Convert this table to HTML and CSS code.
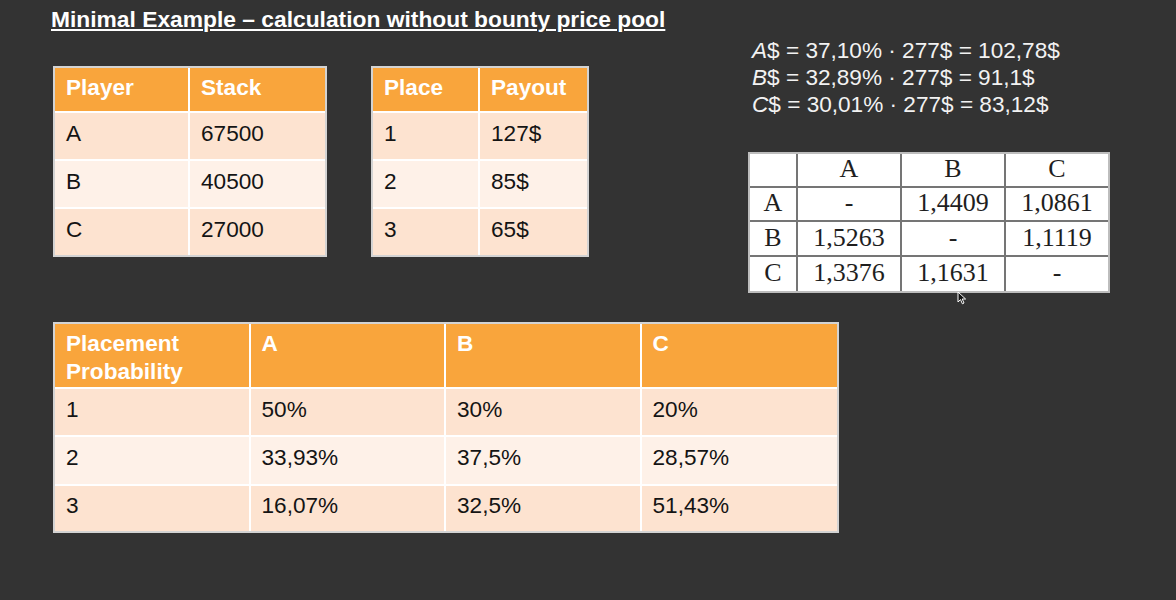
FILE: index.html
```html
<!DOCTYPE html>
<html lang="en">
<head>
<meta charset="utf-8">
<title>Minimal Example</title>
<link rel="stylesheet" href="styles.css">
</head>
<body>
<div class="page">
  <div class="top">
    <div class="left">
      <h1 class="title">Minimal Example – calculation without bounty price pool</h1>
      <div class="tables">
        <table class="otable t-stack">
          <thead><tr><th>Player</th><th>Stack</th></tr></thead>
          <tbody>
            <tr><td>A</td><td>67500</td></tr>
            <tr><td>B</td><td>40500</td></tr>
            <tr><td>C</td><td>27000</td></tr>
          </tbody>
        </table>
        <table class="otable t-payout">
          <thead><tr><th>Place</th><th>Payout</th></tr></thead>
          <tbody>
            <tr><td>1</td><td>127$</td></tr>
            <tr><td>2</td><td>85$</td></tr>
            <tr><td>3</td><td>65$</td></tr>
          </tbody>
        </table>
      </div>
    </div>
    <div class="right">
      <div class="formulas">
        <div><i>A</i>$ = 37,10% · 277$ = 102,78$</div>
        <div><i>B</i>$ = 32,89% · 277$ = 91,1$</div>
        <div><i>C</i>$ = 30,01% · 277$ = 83,12$</div>
      </div>
      <div class="matrix-wrap">
        <table class="matrix">
          <tr><td></td><td>A</td><td>B</td><td>C</td></tr>
          <tr><td>A</td><td>-</td><td>1,4409</td><td>1,0861</td></tr>
          <tr><td>B</td><td>1,5263</td><td>-</td><td>1,1119</td></tr>
          <tr><td>C</td><td>1,3376</td><td>1,1631</td><td>-</td></tr>
        </table>
        <svg class="cursor" width="10" height="14" viewBox="0 0 10 14">
          <path d="M1 1 L1 11 L3.5 8.6 L5.4 12.8 L7 12 L5.2 8 L8.6 8 Z" fill="#111" stroke="#fff" stroke-width="1"/>
        </svg>
      </div>
    </div>
  </div>
  <table class="otable t-prob">
    <thead><tr><th>Placement Probability</th><th>A</th><th>B</th><th>C</th></tr></thead>
    <tbody>
      <tr><td>1</td><td>50%</td><td>30%</td><td>20%</td></tr>
      <tr><td>2</td><td>33,93%</td><td>37,5%</td><td>28,57%</td></tr>
      <tr><td>3</td><td>16,07%</td><td>32,5%</td><td>51,43%</td></tr>
    </tbody>
  </table>
</div>
</body>
</html>
```

FILE: styles.css
```css
html, body {
  margin: 0;
  padding: 0;
  background: #333333;
}
body {
  font-family: "Liberation Sans", Arial, sans-serif;
  width: 1176px;
  height: 600px;
  overflow: hidden;
}
.page {
  padding: 6px 0 0 53px;
}
.top {
  display: flex;
  align-items: flex-start;
}
.left {
  width: 695px;
  flex: none;
}
.title {
  margin: 0 0 0 -2px;
  font-size: 22.8px;
  line-height: 26px;
  font-weight: bold;
  color: #ffffff;
  white-space: nowrap;
  text-decoration: underline;
  text-decoration-thickness: 2px;
  text-underline-offset: 2px;
}
.tables {
  display: flex;
  gap: 44px;
  margin-top: 34px;
}

/* orange PowerPoint-style tables */
.otable {
  border-collapse: separate;
  border-spacing: 0;
  border: 2px solid #d3d3d3;
  table-layout: fixed;
  font-size: 22.6px;
  line-height: 26px;
}
.otable th,
.otable td {
  box-sizing: border-box;
  border-right: 2px solid #ffffff;
  border-bottom: 2px solid #ffffff;
  padding: 0 0 0 11px;
  text-align: left;
  overflow: hidden;
}
.otable th:last-child,
.otable td:last-child {
  border-right: none;
}
.otable tbody tr:last-child td {
  border-bottom: none;
}
.otable th {
  background: #f9a53c;
  color: #ffffff;
  font-weight: bold;
  vertical-align: top;
  padding-top: 7px;
  height: 45px;
}
.otable td {
  color: #141414;
  vertical-align: middle;
  padding-bottom: 4px;
  height: 48px;
}
.otable tbody tr:nth-child(odd) td {
  background: #fde3d0;
}
.otable tbody tr:nth-child(even) td {
  background: #fef1e8;
}
.otable tbody tr:last-child td {
  height: 46px;
}
.t-stack {
  width: 274px;
}
.t-payout {
  width: 218px;
}
.t-prob {
  width: 786px;
  margin-top: 29px;
}
.t-prob th {
  height: 65px;
  line-height: 27.6px;
  padding-top: 6px;
}
.t-prob td {
  height: 48px;
  padding-bottom: 5px;
}
.t-prob tbody tr:nth-child(2) td {
  height: 49px;
}
.t-prob tbody tr:last-child td {
  height: 45px;
}

/* right side */
.right {
  padding-top: 31px;
}
.formulas {
  padding-left: 4px;
  color: #f2f2f2;
  font-size: 22.6px;
  line-height: 27px;
  white-space: nowrap;
}
.formulas i {
  font-style: italic;
}
.matrix-wrap {
  position: relative;
  margin-top: 34px;
  width: 362px;
}
.matrix {
  border-collapse: separate;
  border-spacing: 0;
  border: 2px solid #bdbdbd;
  background: #ffffff;
  width: 362px;
  table-layout: fixed;
  font-family: "Liberation Serif", "Times New Roman", serif;
  font-size: 26px;
  line-height: 30px;
  color: #1e1e1e;
}
.matrix td {
  box-sizing: border-box;
  border-right: 2px solid #757575;
  border-bottom: 2px solid #757575;
  text-align: center;
  vertical-align: middle;
  padding: 0 0 2px 0;
  height: 34px;
}
.matrix td:last-child {
  border-right: none;
}
.matrix tr:last-child td {
  border-bottom: none;
}
.matrix tr:nth-child(3) td {
  height: 35px;
}
.matrix td:nth-child(1) { width: 48px; }
.matrix td:nth-child(2) { width: 104px; }
.matrix td:nth-child(3) { width: 104px; }
.matrix td:nth-child(4) { width: 102px; }
.cursor {
  position: absolute;
  left: 209px;
  top: 139px;
}
```
